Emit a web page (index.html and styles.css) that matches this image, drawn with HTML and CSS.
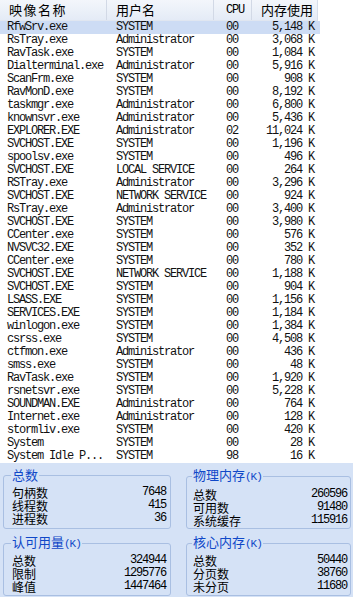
FILE: index.html
```html
<!DOCTYPE html>
<html lang="zh-CN">
<head>
    <meta charset="UTF-8">
    <meta name="viewport" content="width=device-width, initial-scale=1.0">
    <title>Windows 任务管理器</title>
    <link rel="stylesheet" href="styles.css">
</head>
<body>
    <div class="list">
        <div class="row head">
            <span class="name">映像名称</span>
            <span class="user">用户名</span>
            <span class="cpu">CPU</span>
            <span class="mem">内存使用</span>
        </div>
        <div class="row selected"><span class="name">RfwSrv.exe</span><span class="user">SYSTEM</span><span class="cpu">00</span><span class="mem">5,148 K</span></div>
        <div class="row"><span class="name">RsTray.exe</span><span class="user">Administrator</span><span class="cpu">00</span><span class="mem">3,068 K</span></div>
        <div class="row"><span class="name">RavTask.exe</span><span class="user">SYSTEM</span><span class="cpu">00</span><span class="mem">1,084 K</span></div>
        <div class="row"><span class="name">Dialterminal.exe</span><span class="user">Administrator</span><span class="cpu">00</span><span class="mem">5,916 K</span></div>
        <div class="row"><span class="name">ScanFrm.exe</span><span class="user">SYSTEM</span><span class="cpu">00</span><span class="mem">908 K</span></div>
        <div class="row"><span class="name">RavMonD.exe</span><span class="user">SYSTEM</span><span class="cpu">00</span><span class="mem">8,192 K</span></div>
        <div class="row"><span class="name">taskmgr.exe</span><span class="user">Administrator</span><span class="cpu">00</span><span class="mem">6,800 K</span></div>
        <div class="row"><span class="name">knownsvr.exe</span><span class="user">Administrator</span><span class="cpu">00</span><span class="mem">5,436 K</span></div>
        <div class="row"><span class="name">EXPLORER.EXE</span><span class="user">Administrator</span><span class="cpu">02</span><span class="mem">11,024 K</span></div>
        <div class="row"><span class="name">SVCHOST.EXE</span><span class="user">SYSTEM</span><span class="cpu">00</span><span class="mem">1,196 K</span></div>
        <div class="row"><span class="name">spoolsv.exe</span><span class="user">SYSTEM</span><span class="cpu">00</span><span class="mem">496 K</span></div>
        <div class="row"><span class="name">SVCHOST.EXE</span><span class="user">LOCAL SERVICE</span><span class="cpu">00</span><span class="mem">264 K</span></div>
        <div class="row"><span class="name">RSTray.exe</span><span class="user">Administrator</span><span class="cpu">00</span><span class="mem">3,296 K</span></div>
        <div class="row"><span class="name">SVCHOST.EXE</span><span class="user">NETWORK SERVICE</span><span class="cpu">00</span><span class="mem">924 K</span></div>
        <div class="row"><span class="name">RsTray.exe</span><span class="user">Administrator</span><span class="cpu">00</span><span class="mem">3,400 K</span></div>
        <div class="row"><span class="name">SVCHOST.EXE</span><span class="user">SYSTEM</span><span class="cpu">00</span><span class="mem">3,980 K</span></div>
        <div class="row"><span class="name">CCenter.exe</span><span class="user">SYSTEM</span><span class="cpu">00</span><span class="mem">576 K</span></div>
        <div class="row"><span class="name">NVSVC32.EXE</span><span class="user">SYSTEM</span><span class="cpu">00</span><span class="mem">352 K</span></div>
        <div class="row"><span class="name">CCenter.exe</span><span class="user">SYSTEM</span><span class="cpu">00</span><span class="mem">780 K</span></div>
        <div class="row"><span class="name">SVCHOST.EXE</span><span class="user">NETWORK SERVICE</span><span class="cpu">00</span><span class="mem">1,188 K</span></div>
        <div class="row"><span class="name">SVCHOST.EXE</span><span class="user">SYSTEM</span><span class="cpu">00</span><span class="mem">904 K</span></div>
        <div class="row"><span class="name">LSASS.EXE</span><span class="user">SYSTEM</span><span class="cpu">00</span><span class="mem">1,156 K</span></div>
        <div class="row"><span class="name">SERVICES.EXE</span><span class="user">SYSTEM</span><span class="cpu">00</span><span class="mem">1,184 K</span></div>
        <div class="row"><span class="name">winlogon.exe</span><span class="user">SYSTEM</span><span class="cpu">00</span><span class="mem">1,384 K</span></div>
        <div class="row"><span class="name">csrss.exe</span><span class="user">SYSTEM</span><span class="cpu">00</span><span class="mem">4,508 K</span></div>
        <div class="row"><span class="name">ctfmon.exe</span><span class="user">Administrator</span><span class="cpu">00</span><span class="mem">436 K</span></div>
        <div class="row"><span class="name">smss.exe</span><span class="user">SYSTEM</span><span class="cpu">00</span><span class="mem">48 K</span></div>
        <div class="row"><span class="name">RavTask.exe</span><span class="user">SYSTEM</span><span class="cpu">00</span><span class="mem">1,920 K</span></div>
        <div class="row"><span class="name">rsnetsvr.exe</span><span class="user">SYSTEM</span><span class="cpu">00</span><span class="mem">5,228 K</span></div>
        <div class="row"><span class="name">SOUNDMAN.EXE</span><span class="user">Administrator</span><span class="cpu">00</span><span class="mem">764 K</span></div>
        <div class="row"><span class="name">Internet.exe</span><span class="user">Administrator</span><span class="cpu">00</span><span class="mem">128 K</span></div>
        <div class="row"><span class="name">stormliv.exe</span><span class="user">SYSTEM</span><span class="cpu">00</span><span class="mem">420 K</span></div>
        <div class="row"><span class="name">System</span><span class="user">SYSTEM</span><span class="cpu">00</span><span class="mem">28 K</span></div>
        <div class="row"><span class="name">System Idle P...</span><span class="user">SYSTEM</span><span class="cpu">98</span><span class="mem">16 K</span></div>
    </div>

    <div class="panel">
        <fieldset class="group left">
            <legend>总数</legend>
            <div class="stat"><span>句柄数</span><span class="num">7648</span></div>
            <div class="stat"><span>线程数</span><span class="num">415</span></div>
            <div class="stat"><span>进程数</span><span class="num">36</span></div>
        </fieldset>
        <fieldset class="group right">
            <legend>物理内存<span class="unit">(K)</span></legend>
            <div class="stat"><span>总数</span><span class="num">260596</span></div>
            <div class="stat"><span>可用数</span><span class="num">91480</span></div>
            <div class="stat"><span>系统缓存</span><span class="num">115916</span></div>
        </fieldset>
        <fieldset class="group left lower">
            <legend>认可用量<span class="unit">(K)</span></legend>
            <div class="stat"><span>总数</span><span class="num">324944</span></div>
            <div class="stat"><span>限制</span><span class="num">1295776</span></div>
            <div class="stat"><span>峰值</span><span class="num">1447464</span></div>
        </fieldset>
        <fieldset class="group right lower">
            <legend>核心内存<span class="unit">(K)</span></legend>
            <div class="stat"><span>总数</span><span class="num">50440</span></div>
            <div class="stat"><span>分页数</span><span class="num">38760</span></div>
            <div class="stat"><span>未分页</span><span class="num">11680</span></div>
        </fieldset>
    </div>
</body>
</html>
```

FILE: styles.css
```css
* {
    margin: 0;
    padding: 0;
    box-sizing: border-box;
}
body {
    width: 353px;
    height: 597px;
    overflow: hidden;
    background: #ffffff;
    color: #111111;
    font-family: "Liberation Mono", "Noto Sans CJK SC", monospace;
    font-size: 12px;
}
.list {
    height: 463px;
    background: #ffffff;
}
.row {
    display: grid;
    grid-template-columns: 107px 107px 38px 66px;
    width: 318px;
    height: 13px;
    line-height: 13px;
    letter-spacing: -1.2px;
    white-space: nowrap;
}
.row span {
    overflow: hidden;
}
.name {
    padding-left: 7px;
}
.user {
    padding-left: 9px;
}
.cpu {
    padding-left: 12px;
}
.mem {
    text-align: right;
    padding-right: 4px;
}
.selected {
    width: 320px;
    background: #cddcf4;
}

/* column header */
.head {
    height: 21px;
    line-height: 20px;
    background: linear-gradient(#f3f6fb, #e4ebf6);
    border-bottom: 1px solid #e0e6f0;
    border-right: 1px solid #d6deea;
    color: #000000;
}
.head span {
    font-family: "Noto Sans CJK SC", sans-serif;
    font-size: 13px;
    letter-spacing: 0;
    border-right: 1px solid #d2d9e6;
}
.head .name {
    padding-left: 9px;
    letter-spacing: 1.5px;
}
.head .cpu {
    font-family: "Liberation Mono", monospace;
    font-size: 12px;
    letter-spacing: -1.2px;
}
.head .mem {
    padding-right: 5px;
    border-right: none;
}

/* lower panel */
.panel {
    height: 134px;
    background: #d5e2f6;
    padding: 5px 3px 0 3px;
    display: grid;
    grid-template-columns: 168px 165px;
    grid-template-rows: 61px 61px;
    column-gap: 15px;
    row-gap: 6px;
}
.group {
    min-width: 0;
    border: 1px solid #a9bfe2;
    border-radius: 3px;
    padding: 4px 4px 3px 8px;
}
.group.right {
    padding-left: 6px;
    padding-right: 3px;
}
.group.lower {
    padding-top: 3px;
    padding-bottom: 4px;
}
.group legend {
    margin-left: -1px;
    padding: 0 1px;
    font-family: "Noto Sans CJK SC", sans-serif;
    font-size: 13px;
    line-height: 14px;
    color: #1048c8;
}
.unit {
    font-family: "Liberation Mono", monospace;
    font-size: 11px;
    letter-spacing: -1px;
}
.stat {
    display: flex;
    justify-content: space-between;
    height: 13px;
    line-height: 13px;
    font-family: "Noto Sans CJK SC", sans-serif;
    font-size: 12px;
    color: #000000;
}
.num {
    font-family: "Liberation Mono", monospace;
    letter-spacing: -1.2px;
}
```
